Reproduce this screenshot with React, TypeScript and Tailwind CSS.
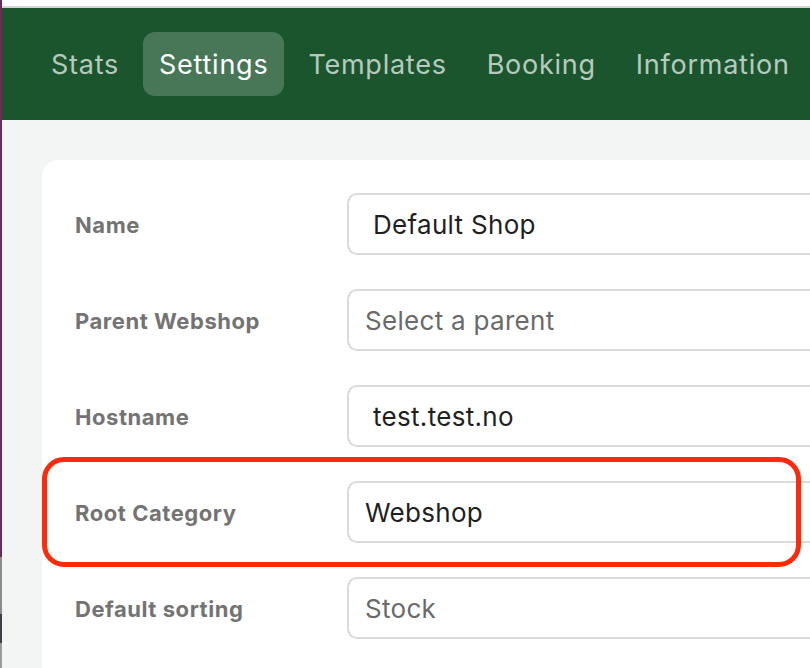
import { useState } from 'react'

const tabs = ['Stats', 'Settings', 'Templates', 'Booking', 'Information']

const fields: { label: string; value: string; placeholder?: boolean; wide?: boolean }[] = [
  { label: 'Name', value: 'Default Shop', wide: true },
  { label: 'Parent Webshop', value: 'Select a parent', placeholder: true },
  { label: 'Hostname', value: 'test.test.no', wide: true },
  { label: 'Root Category', value: 'Webshop' },
  { label: 'Default sorting', value: 'Stock', placeholder: true },
]

export default function App() {
  const [active, setActive] = useState('Settings')

  return (
    <div className="flex h-[668px] w-[810px] overflow-hidden bg-[#f3f5f4] font-['Inter',sans-serif]">
      {/* window edge */}
      <div className="flex w-[2px] shrink-0 flex-col">
        <div className="h-[557px] bg-[#6b2b5f]" />
        <div className="h-[57px] bg-[#8a8a8a]" />
        <div className="h-[29px] bg-[#3c3f46]" />
        <div className="flex-1 bg-[#9a9a9a]" />
      </div>

      <div className="flex min-w-0 flex-1 flex-col">
        <div className="h-[6px] bg-white" />
        <div className="h-[2px] bg-[#d4d4d4]" />
        <nav className="flex h-[112px] items-center gap-2 bg-[#1a552d] pl-[33px]">
          {tabs.map(t => (
            <button
              key={t}
              onClick={() => setActive(t)}
              className={`h-[64px] shrink-0 rounded-[12px] px-4 pt-[2px] text-[27px] tracking-[0.75px] ${active === t ? 'bg-white/20 text-white' : 'text-white/70'}`}
            >
              {t}
            </button>
          ))}
        </nav>

        <main className="flex-1 pl-[40px] pt-[40px]">
          <div className="relative h-full rounded-tl-[16px] bg-white pl-[33px] pt-[33px]">
            <div className="flex flex-col gap-[34px]">
              {fields.map(f => (
                <div key={f.label} className="flex items-center">
                  <label className="w-[272px] shrink-0 pt-[2px] text-[22px] font-bold tracking-[0.55px] text-[#737373]">{f.label}</label>
                  <div
                    className={`flex h-[62px] w-[600px] shrink-0 items-center rounded-[10px] border-2 border-[#dadada] text-[26px] tracking-[0.3px] ${f.wide ? 'pl-[24px]' : 'pl-[16px]'} ${f.placeholder ? 'text-[#6a6a6a]' : 'text-[#1f1f1f]'}`}
                  >
                    {f.value}
                  </div>
                </div>
              ))}
            </div>

            {/* highlight around Root Category */}
            <div className="pointer-events-none absolute left-[0px] top-[297px] h-[110px] w-[759px] rounded-[22px] border-[5px] border-[#ff2a0a]" />
          </div>
        </main>
      </div>
    </div>
  )
}
